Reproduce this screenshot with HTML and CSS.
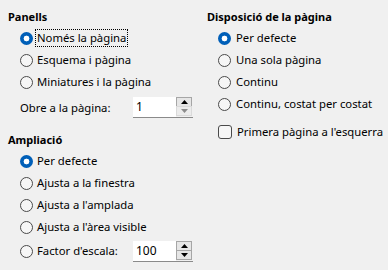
FILE: index.html
```html
<!DOCTYPE html>
<html>
<head>
<meta charset="utf-8">
<link rel="stylesheet" href="styles.css">
</head>
<body>
<div class="dialog">
  <div class="col col-left">
    <div class="heading">Panells</div>
    <div class="option"><span class="radio checked"></span><span class="label focus">Només la pàgina</span></div>
    <div class="option"><span class="radio"></span><span class="label">Esquema i pàgina</span></div>
    <div class="option"><span class="radio"></span><span class="label">Miniatures i la pàgina</span></div>
    <div class="spinrow first-spin">
      <span class="spinlabel">Obre a la pàgina:</span>
      <div class="spin">
        <span class="value">1</span>
        <div class="btns">
          <span class="btn up active"><svg width="7" height="4" viewBox="0 0 7 4"><polygon points="0,4 7,4 3.5,0" fill="#000"/></svg></span>
          <span class="btn down disabled"><svg width="7" height="4" viewBox="0 0 7 4"><polygon points="0,0 7,0 3.5,4" fill="#8c8c8c"/></svg></span>
        </div>
      </div>
    </div>

    <div class="heading second">Ampliació</div>
    <div class="option"><span class="radio checked"></span><span class="label">Per defecte</span></div>
    <div class="option"><span class="radio"></span><span class="label">Ajusta a la finestra</span></div>
    <div class="option"><span class="radio"></span><span class="label">Ajusta a l'amplada</span></div>
    <div class="option"><span class="radio"></span><span class="label">Ajusta a l'àrea visible</span></div>
    <div class="spinrow second-spin">
      <span class="spinlabel radiolabel"><span class="radio"></span><span class="label">Factor d'escala:</span></span>
      <div class="spin">
        <span class="value">100</span>
        <div class="btns">
          <span class="btn up active"><svg width="7" height="4" viewBox="0 0 7 4"><polygon points="0,4 7,4 3.5,0" fill="#000"/></svg></span>
          <span class="btn down active"><svg width="7" height="4" viewBox="0 0 7 4"><polygon points="0,0 7,0 3.5,4" fill="#000"/></svg></span>
        </div>
      </div>
    </div>
  </div>

  <div class="col col-right">
    <div class="heading">Disposició de la pàgina</div>
    <div class="option tight"><span class="radio checked"></span><span class="label">Per defecte</span></div>
    <div class="option tight"><span class="radio"></span><span class="label">Una sola pàgina</span></div>
    <div class="option tight"><span class="radio"></span><span class="label">Continu</span></div>
    <div class="option tight"><span class="radio"></span><span class="label">Continu, costat per costat</span></div>
    <div class="option tight check-row"><span class="checkbox"></span><span class="label">Primera pàgina a l'esquerra</span></div>
  </div>
</div>
</body>
</html>
```

FILE: styles.css
```css
html, body {
  margin: 0;
  padding: 0;
  background: #f0f0f0;
}

body {
  font-family: "Noto Sans", "Open Sans", sans-serif;
  font-size: 11.3px;
  color: #000;
}

.dialog {
  display: flex;
  width: 388px;
  height: 270px;
  box-sizing: border-box;
  padding: 9px 0 0 8px;
  overflow: hidden;
}

.col-left {
  width: 199px;
  flex: none;
}

.col-right {
  flex: 1;
}

.heading {
  font-weight: 700;
  font-size: 11px;
  height: 16px;
  line-height: 16px;
  margin-bottom: 2px;
  white-space: nowrap;
}

.heading.second {
  margin-top: 14px;
}

.option {
  display: flex;
  align-items: center;
  height: 22px;
  padding-left: 12px;
}

.option.tight {
  padding-left: 11px;
}

.radio {
  flex: none;
  width: 13px;
  height: 13px;
  box-sizing: border-box;
  border-radius: 50%;
  border: 1px solid #4a4a4a;
  background: #f6f6f6;
  margin-right: 4px;
}

.option.tight .radio {
  margin-right: 5px;
}

.radio.checked {
  border: none;
  background: radial-gradient(circle, #ffffff 0 2.6px, #005fb8 3.2px);
}

.checkbox {
  flex: none;
  width: 14px;
  height: 14px;
  box-sizing: border-box;
  border-radius: 3px;
  border: 1px solid #4a4a4a;
  background: #f6f6f6;
  margin-right: 5px;
}

.check-row {
  margin-top: 6px;
}

.label {
  white-space: nowrap;
  line-height: 16px;
}

.label.focus {
  outline: 1px dotted #000;
  outline-offset: 0;
  padding: 0 1px;
  margin-left: -1px;
}

.spinrow {
  display: flex;
  align-items: center;
  height: 22px;
  padding-left: 12px;
}

.first-spin {
  margin-top: 3px;
}

.second-spin {
  margin-top: 2px;
}

.spinlabel {
  width: 113px;
  flex: none;
  white-space: nowrap;
}

.radiolabel {
  display: flex;
  align-items: center;
}

.spin {
  display: flex;
  width: 60px;
  height: 21px;
  box-sizing: border-box;
  border-bottom: 1px solid #8a8a8a;
  background: #ffffff;
}

.spin .value {
  flex: 1;
  padding-left: 3px;
  line-height: 20px;
  font-size: 12px;
}

.btns {
  width: 16px;
  display: flex;
  flex-direction: column;
  padding: 0 1px 0 0;
  background: #f0f0f0;
}

.btn {
  height: 10px;
  box-sizing: border-box;
  display: flex;
  align-items: center;
  justify-content: center;
  background: #e6e6e6;
}

.btn.active {
  border: 1px solid #a6a6a6;
}

.btn.disabled {
  border: 1px solid #dadada;
  background: #ececec;
}

.btn.down {
  margin-top: -1px;
  height: 10px;
}
```
